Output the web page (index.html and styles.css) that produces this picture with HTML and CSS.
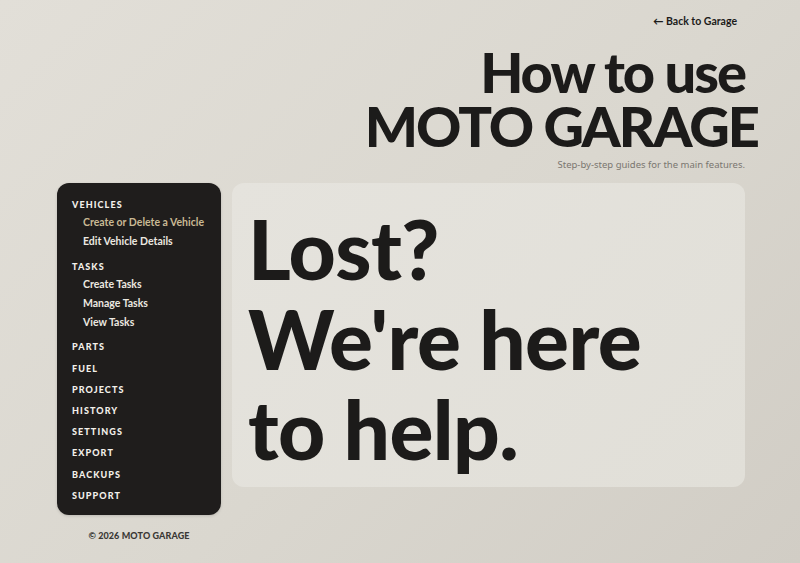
FILE: index.html
```html
<!DOCTYPE html>
<html lang="en">
<head>
<meta charset="UTF-8">
<meta name="viewport" content="width=device-width, initial-scale=1.0">
<title>How to use Moto Garage</title>
<link rel="stylesheet" href="styles.css">
</head>
<body>
<header class="top">
  <a class="back-link" href="#">&larr; Back to Garage</a>
  <h1 class="title">
    <span class="title-line first">How to use</span>
    <span class="title-line">MOTO GARAGE</span>
  </h1>
  <p class="subtitle">Step-by-step guides for the main features.</p>
</header>

<div class="layout">
  <aside class="side">
    <nav class="side-nav">
      <div class="nav-group">
        <div class="nav-label">Vehicles</div>
        <ul class="nav-sub">
          <li><a class="active" href="#">Create or Delete a Vehicle</a></li>
          <li><a href="#">Edit Vehicle Details</a></li>
        </ul>
      </div>
      <div class="nav-group">
        <div class="nav-label">Tasks</div>
        <ul class="nav-sub">
          <li><a href="#">Create Tasks</a></li>
          <li><a href="#">Manage Tasks</a></li>
          <li><a href="#">View Tasks</a></li>
        </ul>
      </div>
      <div class="nav-group"><div class="nav-label">Parts</div></div>
      <div class="nav-group"><div class="nav-label">Fuel</div></div>
      <div class="nav-group"><div class="nav-label">Projects</div></div>
      <div class="nav-group"><div class="nav-label">History</div></div>
      <div class="nav-group"><div class="nav-label">Settings</div></div>
      <div class="nav-group"><div class="nav-label">Export</div></div>
      <div class="nav-group"><div class="nav-label">Backups</div></div>
      <div class="nav-group"><div class="nav-label">Support</div></div>
    </nav>
    <footer class="copy">&copy; 2026 MOTO GARAGE</footer>
  </aside>

  <main class="hero">
    <h2 class="hero-text">Lost?<br>We're here<br>to help.</h2>
  </main>
</div>
</body>
</html>
```

FILE: styles.css
```css
html, body {
  margin: 0;
  height: 100%;
}

body {
  font-family: 'Lato', 'Noto Sans', sans-serif;
  background: linear-gradient(135deg, #e2dfd8 0%, #dad7cf 55%, #d1cdc5 100%);
  color: #1c1b1a;
  overflow: hidden;
}

a {
  text-decoration: none;
  color: inherit;
}

/* header */
.top {
  display: flex;
  flex-direction: column;
  align-items: flex-end;
  padding: 14px 42px 0 0;
}

.back-link {
  font-size: 10.5px;
  font-weight: 700;
  line-height: 14px;
  margin-right: 21px;
  color: #1c1b1a;
}

.title {
  margin: 17px 0 0;
  font-size: 56px;
  font-weight: 900;
  line-height: 54px;
  letter-spacing: -2px;
  text-align: right;
}

.title-line {
  display: block;
}

.title-line.first {
  margin-right: 13px;
}

.subtitle {
  margin: 5px 13px 0 0;
  font-family: 'Noto Sans', sans-serif;
  font-size: 9.5px;
  line-height: 14px;
  color: #7a7670;
}

/* main layout */
.layout {
  display: flex;
  align-items: flex-start;
  gap: 11px;
  margin: 11px 55px 0 57px;
}

.side {
  width: 164px;
  flex-shrink: 0;
}

.side-nav {
  background: #1f1d1c;
  border-radius: 12px;
  padding: 15px 15px 5px;
  box-shadow: 0 1px 3px rgba(0, 0, 0, 0.15);
}

.nav-group {
  margin-bottom: 7.2px;
}

.nav-label {
  font-size: 9px;
  font-weight: 900;
  line-height: 14px;
  letter-spacing: 1.1px;
  text-transform: uppercase;
  color: #f3f0ea;
}

.nav-sub {
  list-style: none;
  margin: 1px 0 0;
  padding: 0 0 1.5px 11px;
}

.nav-sub li {
  font-size: 10.5px;
  font-weight: 700;
  line-height: 19px;
  color: #ece8e0;
}

.nav-sub a.active {
  color: #c9b994;
}

.copy {
  margin-top: 15px;
  text-align: center;
  font-size: 9px;
  font-weight: 900;
  letter-spacing: 0.1px;
  color: #3a3835;
}

/* hero card */
.hero {
  flex: 1;
  background: linear-gradient(135deg, #e5e3dd, #e1dfd8);
  border-radius: 12px;
  padding: 20px 16px 14px;
}

.hero-text {
  margin: 0;
  font-size: 82px;
  font-weight: 900;
  line-height: 90px;
  letter-spacing: -0.6px;
  color: #1c1b1a;
}
```
